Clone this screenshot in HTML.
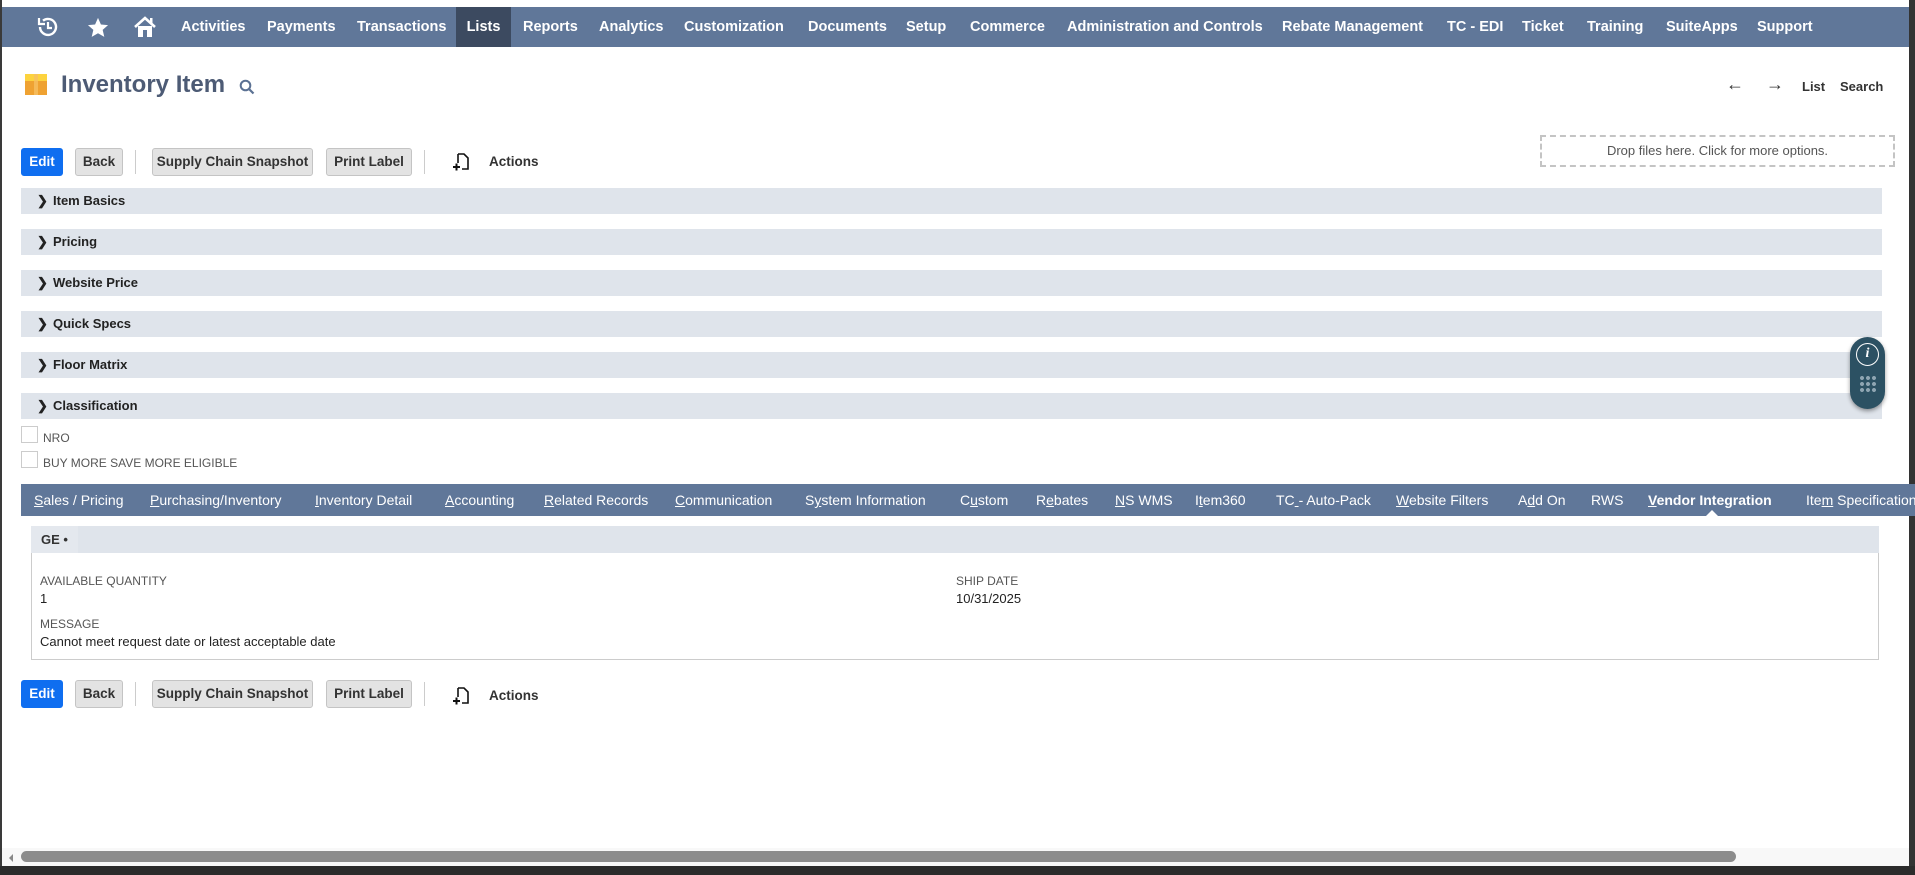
<!DOCTYPE html>
<html><head><meta charset="utf-8"><style>
*{margin:0;padding:0;box-sizing:border-box}
body{width:1915px;height:875px;position:relative;background:#fff;font-family:"Liberation Sans",sans-serif;overflow:hidden;color:#333}
.a{position:absolute}
.nav{left:2px;top:7px;width:1907px;height:40px;background:#607799}
.nav span{position:absolute;top:0;height:40px;line-height:40px;color:#fff;font-weight:bold;font-size:14.5px;white-space:nowrap}
.btn{position:absolute;height:28px;line-height:26px;border:1px solid #c4c4c4;background:#e3e3e3;border-radius:3px;font-size:13.5px;font-weight:bold;color:#333;text-align:center}
.edit{background:#0f6ef0;border-color:#0f6ef0;color:#fff}
.sep{position:absolute;width:1px;height:24px;background:#ccc}
.sec{position:absolute;left:21px;width:1861px;height:26px;background:#dfe4eb;font-weight:bold;font-size:13px;color:#222;line-height:26px}
.sec b{position:absolute;left:16px;font-size:13px}
.sec i{position:absolute;left:32px;font-style:normal}
.tabs{left:21px;top:484px;width:1894px;height:32px;background:#607799}
.tabs span{position:absolute;top:0;line-height:32px;color:#fff;font-size:14px;white-space:nowrap}
.lbl{position:absolute;font-size:12px;color:#555}
.val{position:absolute;font-size:13px;color:#222}
</style></head><body>
<div class="a" style="left:0;top:0;width:2px;height:875px;background:#3a3a3a"></div>
<div class="a" style="left:1909px;top:0;width:6px;height:875px;background:#333"></div>
<div class="a nav">
<svg class="a" style="left:33px;top:9px" width="24" height="22" viewBox="0 0 24 22"><path d="M5 11a8 8 0 1 0 3-6.3" fill="none" stroke="#fff" stroke-width="2.4"/><path d="M4 2v6h6" fill="none" stroke="#fff" stroke-width="2.2"/><path d="M13 6v6h4" fill="none" stroke="#fff" stroke-width="2.2"/></svg>
<svg class="a" style="left:85px;top:10px" width="22" height="21" viewBox="0 0 24 23"><path d="M12 1l3.2 7.2 7.8.7-5.9 5.2 1.8 7.7L12 17.8 5.1 21.8l1.8-7.7L1 8.9l7.8-.7z" fill="#fff"/></svg>
<svg class="a" style="left:131px;top:8px" width="24" height="24" viewBox="0 0 24 24"><path d="M2 12L12 3l10 9" fill="none" stroke="#fff" stroke-width="2.6"/><path d="M5 11v11h14V11" fill="#fff"/><rect x="10" y="15" width="4" height="7" fill="#607799"/><rect x="17" y="3" width="2.5" height="6" fill="#fff"/></svg>
<span style="left:179px">Activities</span><span style="left:265px">Payments</span><span style="left:355px">Transactions</span>
<span style="left:454px;width:55px;background:#3c4a60;text-align:center">Lists</span>
<span style="left:521px">Reports</span><span style="left:597px">Analytics</span><span style="left:682px">Customization</span>
<span style="left:806px">Documents</span><span style="left:904px">Setup</span><span style="left:968px">Commerce</span>
<span style="left:1065px">Administration and Controls</span><span style="left:1280px">Rebate Management</span>
<span style="left:1445px">TC - EDI</span><span style="left:1520px">Ticket</span><span style="left:1585px">Training</span>
<span style="left:1664px">SuiteApps</span><span style="left:1755px">Support</span>
</div>
<svg class="a" style="left:25px;top:74px" width="22" height="21" viewBox="0 0 22 21"><rect x="0" y="0" width="22" height="7" fill="#fdd33e"/><rect x="0" y="7" width="22" height="14" fill="#efa232"/><rect x="9" y="0" width="4" height="21" fill="#f6c063" opacity=".8"/></svg>
<div class="a" style="left:61px;top:71px;font-size:24px;font-weight:bold;color:#4d5b75">Inventory Item</div>
<svg class="a" style="left:239px;top:79px" width="16" height="16" viewBox="0 0 16 16"><circle cx="6.5" cy="6.5" r="4.8" fill="none" stroke="#5b7193" stroke-width="2"/><path d="M10 10l4.5 4.5" stroke="#5b7193" stroke-width="2.2"/></svg>
<div class="a" style="left:1726px;top:74px;font-size:18px;font-weight:bold">&#8592;</div>
<div class="a" style="left:1766px;top:74px;font-size:18px;font-weight:bold">&#8594;</div>
<div class="a" style="left:1802px;top:79px;font-size:13px;font-weight:bold">List</div>
<div class="a" style="left:1840px;top:79px;font-size:13px;font-weight:bold">Search</div>
<div class="a" style="left:1540px;top:135px;width:355px;height:32px;border:2px dashed #c4c4c4;text-align:center;line-height:28px;font-size:13px;color:#555">Drop files here. Click for more options.</div>

<div class="btn edit" style="left:21px;top:148px;width:42px">Edit</div>
<div class="btn" style="left:75px;top:148px;width:48px">Back</div>
<div class="sep" style="left:135px;top:150px"></div>
<div class="btn" style="left:152px;top:148px;width:161px">Supply Chain Snapshot</div>
<div class="btn" style="left:326px;top:148px;width:86px">Print Label</div>
<div class="sep" style="left:424px;top:150px"></div>
<svg class="a" style="left:452px;top:152px" width="18" height="20" viewBox="0 0 18 20"><path d="M6 2h6l4 4v11h-6M6 2v9" fill="none" stroke="#111" stroke-width="1.6"/><path d="M1 15h7M4.5 11.5v7" stroke="#111" stroke-width="2"/></svg>
<div class="a" style="left:489px;top:154px;font-size:13.5px;font-weight:bold">Actions</div>

<div class="sec" style="top:188px"><b>&#x276F;</b><i>Item Basics</i></div>
<div class="sec" style="top:229px"><b>&#x276F;</b><i>Pricing</i></div>
<div class="sec" style="top:270px"><b>&#x276F;</b><i>Website Price</i></div>
<div class="sec" style="top:311px"><b>&#x276F;</b><i>Quick Specs</i></div>
<div class="sec" style="top:352px"><b>&#x276F;</b><i>Floor Matrix</i></div>
<div class="sec" style="top:393px"><b>&#x276F;</b><i>Classification</i></div>

<div class="a" style="left:1850px;top:337px;width:35px;height:72px;border-radius:18px;background:#2c5163;box-shadow:0 2px 4px rgba(0,0,0,.4)"></div>
<div class="a" style="left:1856px;top:343px;width:23px;height:23px;border:1.5px solid #fff;border-radius:50%;color:#fff;font:italic bold 14px 'Liberation Serif',serif;text-align:center;line-height:20px">i</div>
<div class="a" style="left:1859px;top:375px;width:18px;height:18px;background:radial-gradient(circle,#8fa5b2 1.8px,transparent 2.2px) 0 0/6px 6px"></div>

<div class="a" style="left:21px;top:426px;width:17px;height:17px;border:1px solid #ccc"></div>
<div class="lbl" style="left:43px;top:431px">NRO</div>
<div class="a" style="left:21px;top:451px;width:17px;height:17px;border:1px solid #ccc"></div>
<div class="lbl" style="left:43px;top:456px">BUY MORE SAVE MORE ELIGIBLE</div>

<div class="a tabs">
<span style="left:13px"><u>S</u>ales / Pricing</span><span style="left:129px"><u>P</u>urchasing/Inventory</span>
<span style="left:294px"><u>I</u>nventory Detail</span><span style="left:424px"><u>A</u>ccounting</span>
<span style="left:523px"><u>R</u>elated Records</span><span style="left:654px"><u>C</u>ommunication</span>
<span style="left:784px">S<u>y</u>stem Information</span><span style="left:939px">C<u>u</u>stom</span>
<span style="left:1015px">R<u>e</u>bates</span><span style="left:1094px"><u>N</u>S WMS</span>
<span style="left:1174px">I<u>t</u>em360</span><span style="left:1255px">TC<u> </u>- Auto-Pack</span>
<span style="left:1375px"><u>W</u>ebsite Filters</span><span style="left:1497px">A<u>d</u>d On</span>
<span style="left:1570px">RWS</span><span style="left:1627px;font-weight:bold"><u>V</u>endor Integration</span>
<span style="left:1785px">Ite<u>m</u> Specifications</span>
</div>
<div class="a" style="left:1706px;top:510px;width:0;height:0;border-left:6px solid transparent;border-right:6px solid transparent;border-bottom:6px solid #fff"></div>
<div class="a" style="left:31px;top:526px;width:1848px;height:27px;background:#dfe4eb"></div>
<div class="a" style="left:31px;top:526px;width:47px;height:27px;background:#e4e8ee;font-weight:bold;font-size:13px;line-height:27px;padding-left:10px;color:#333">GE &#8226;</div>
<div class="a" style="left:31px;top:553px;width:1848px;height:107px;border:1px solid #ccc;border-top:none"></div>
<div class="lbl" style="left:40px;top:574px">AVAILABLE QUANTITY</div>
<div class="val" style="left:40px;top:591px">1</div>
<div class="lbl" style="left:40px;top:617px">MESSAGE</div>
<div class="val" style="left:40px;top:634px">Cannot meet request date or latest acceptable date</div>
<div class="lbl" style="left:956px;top:574px">SHIP DATE</div>
<div class="val" style="left:956px;top:591px">10/31/2025</div>

<div class="btn edit" style="left:21px;top:680px;width:42px">Edit</div>
<div class="btn" style="left:75px;top:680px;width:48px">Back</div>
<div class="sep" style="left:135px;top:682px"></div>
<div class="btn" style="left:152px;top:680px;width:161px">Supply Chain Snapshot</div>
<div class="btn" style="left:326px;top:680px;width:86px">Print Label</div>
<div class="sep" style="left:424px;top:682px"></div>
<svg class="a" style="left:452px;top:686px" width="18" height="20" viewBox="0 0 18 20"><path d="M6 2h6l4 4v11h-6M6 2v9" fill="none" stroke="#111" stroke-width="1.6"/><path d="M1 15h7M4.5 11.5v7" stroke="#111" stroke-width="2"/></svg>
<div class="a" style="left:489px;top:688px;font-size:13.5px;font-weight:bold">Actions</div>

<div class="a" style="left:2px;top:848px;width:1907px;height:18px;background:#f8f8f8"></div>
<div class="a" style="left:9px;top:854px;width:0;height:0;border-top:4px solid transparent;border-bottom:4px solid transparent;border-right:4px solid #888"></div>
<div class="a" style="left:21px;top:851px;width:1715px;height:11px;background:#8c8c8c;border-radius:6px"></div>
<div class="a" style="left:0;top:866px;width:1915px;height:9px;background:#2b2b2b"></div>
</body></html>
